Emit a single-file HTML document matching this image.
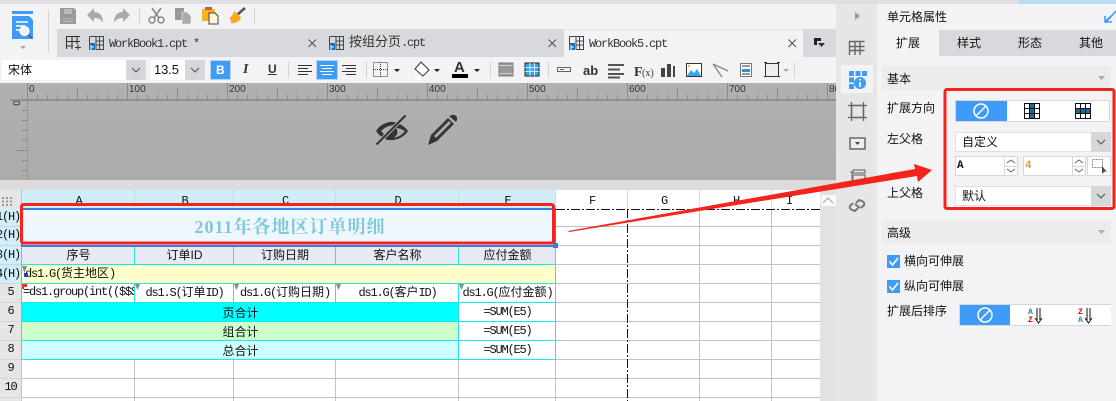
<!DOCTYPE html>
<html><head><meta charset="utf-8">
<style>
html,body{margin:0;padding:0;width:1116px;height:401px;overflow:hidden;background:#f3f3f6}
body{position:relative;font-family:"Liberation Sans","WenQuanYi Zen Hei",sans-serif;font-size:12px;color:#111}
.b{position:absolute}
.t{position:absolute;white-space:pre;line-height:16px}
.m{font-family:"Liberation Mono","WenQuanYi Zen Hei",monospace;font-size:12px;letter-spacing:-1.2px}
.k{letter-spacing:0}
.c{text-align:center}
.s{font-family:"Liberation Sans","WenQuanYi Zen Hei",sans-serif;font-size:12px}
.r{font-size:10px;color:#333}
svg{position:absolute;left:0;top:0;overflow:visible}
</style></head><body>
<div class="b" style="left:0;top:0;width:1116px;height:4px;background:#e0e0e2"></div>
<div class="b" style="left:1019px;top:0;width:97px;height:4px;background:#b8dcf2"></div>
<!-- tab bar -->
<div class="b" style="left:57px;top:29px;width:783px;height:28px;background:#d8d9dc"></div>
<div class="b" style="left:564px;top:29px;width:239px;height:28px;background:#f3f3f6;border-top:1px solid #e2e2e4;box-sizing:border-box"></div>
<div class="t m" style="left:109px;top:36px;color:#333">WorkBook1.cpt *</div>
<div class="t m" style="left:349px;top:35px;color:#333"><span class="k" style="font-size:13px">按组分页</span>.cpt</div>
<div class="t m" style="left:589px;top:36px;color:#333">WorkBook5.cpt</div>
<!-- toolbar -->
<div class="b" style="left:2px;top:60px;width:124px;height:20px;background:#fff"></div>
<div class="b" style="left:126px;top:60px;width:20px;height:20px;background:#d6d7da"></div>
<div class="b" style="left:151px;top:60px;width:34px;height:20px;background:#fff"></div>
<div class="b" style="left:185px;top:60px;width:20px;height:20px;background:#d6d7da"></div>
<div class="t" style="left:8px;top:62px">宋体</div>
<div class="t" style="left:154px;top:62px;font-size:13px;letter-spacing:-.1px">13.5</div>
<div class="b" style="left:210px;top:60px;width:21px;height:20px;background:#3f9bf8;border:1px solid #b8d4ee;box-sizing:border-box"></div>
<div class="t" style="left:216px;top:62px;color:#fff;font-weight:bold;font-size:12px">B</div>
<div class="t" style="left:243px;top:62px;color:#333;font-style:italic;font-weight:bold;font-family:'Liberation Serif',serif;font-size:14px">I</div>
<div class="t" style="left:268px;top:61px;color:#333;font-weight:bold;font-size:12px;text-decoration:underline">U</div>
<div class="b" style="left:316px;top:60px;width:22px;height:20px;background:#3f9bf8;border:1px solid #b8d4ee;box-sizing:border-box"></div>
<!-- ruler -->
<div class="b" style="left:0;top:83px;width:836px;height:97px;background:linear-gradient(#b1b1b1,#ababab)"></div>
<div class="b" style="left:0;top:180px;width:836px;height:10px;background:#dcdcde"></div>
<div class="t r" style="left:29px;top:82px">0</div>
<div class="t r" style="left:129px;top:82px">100</div>
<div class="t r" style="left:229px;top:82px">200</div>
<div class="t r" style="left:329px;top:82px">300</div>
<div class="t r" style="left:429px;top:82px">400</div>
<div class="t r" style="left:529px;top:82px">500</div>
<div class="t r" style="left:629px;top:82px">600</div>
<div class="t r" style="left:729px;top:82px">700</div>
<div class="t r" style="left:829px;top:82px;width:7px;overflow:hidden">800</div>
<div class="t r" style="left:12px;top:95px;transform:rotate(90deg)">0</div>
<!-- sheet -->
<div class="b" style="left:0;top:190px;width:820px;height:211px;background:#fff"></div>
<div class="b" style="left:0;top:190px;width:22px;height:211px;background:#e6e6e6"></div>
<div class="b" style="left:0;top:209px;width:22px;height:75px;background:#d0eefa"></div>
<div class="b" style="left:22px;top:190px;width:534px;height:19px;background:#d0eefa"></div>
<div class="b" style="left:22px;top:209px;width:534px;height:37px;background:#eef6fe"></div>
<div class="b" style="left:22px;top:246px;width:534px;height:19px;background:#e6eaf2"></div>
<div class="b" style="left:22px;top:265px;width:534px;height:19px;background:#ffffcc"></div>
<div class="b" style="left:22px;top:303px;width:437px;height:19px;background:#00ffff"></div>
<div class="b" style="left:22px;top:322px;width:437px;height:19px;background:#ccffcc"></div>
<div class="b" style="left:22px;top:341px;width:437px;height:19px;background:#ccffff"></div>
<div class="b" style="left:820px;top:190px;width:16px;height:211px;background:#e2e2e2"></div>
<div class="b" style="left:821px;top:195px;width:15px;height:11px;background:#f8f8f8"></div>
<!-- right strip + panel -->
<div class="b" style="left:836px;top:4px;width:41px;height:397px;background:#e6e6e6"></div>
<div class="b" style="left:841px;top:65px;width:32px;height:28px;background:#f3f3f6"></div>
<div class="b" style="left:939px;top:30px;width:177px;height:26px;background:#d8d9dc"></div>
<div class="t" style="left:887px;top:9px">单元格属性</div>
<div class="t" style="left:896px;top:35px">扩展</div>
<div class="t" style="left:957px;top:35px">样式</div>
<div class="t" style="left:1018px;top:35px">形态</div>
<div class="t" style="left:1079px;top:35px">其他</div>
<div class="b" style="left:882px;top:66px;width:229px;height:24px;background:#ececec"></div>
<div class="t" style="left:887px;top:71px">基本</div>
<div class="t" style="left:887px;top:100px">扩展方向</div>
<div class="t" style="left:887px;top:131px">左父格</div>
<div class="t" style="left:887px;top:185px">上父格</div>
<div class="b" style="left:955px;top:100px;width:155px;height:22px;background:#fff;border:1px solid #d6d7da;box-sizing:border-box"></div>
<div class="b" style="left:956px;top:101px;width:51px;height:20px;background:#3f9bf8"></div>
<div class="b" style="left:955px;top:132px;width:156px;height:20px;background:#fff;border:1px solid #e0e0e3;box-sizing:border-box"></div>
<div class="b" style="left:1091px;top:132px;width:20px;height:20px;background:#d6d7da"></div>
<div class="t" style="left:962px;top:134px">自定义</div>
<div class="b" style="left:955px;top:156px;width:63px;height:20px;background:#fff;border:1px solid #d6d7da;box-sizing:border-box"></div>
<div class="b" style="left:1023px;top:156px;width:63px;height:20px;background:#fff;border:1px solid #d6d7da;box-sizing:border-box"></div>
<div class="b" style="left:1087px;top:156px;width:24px;height:20px;background:#fff;border:1px solid #d6d7da;box-sizing:border-box"></div>
<div class="b" style="left:1004px;top:156px;width:1px;height:20px;background:#d6d7da"></div>
<div class="b" style="left:1072px;top:156px;width:1px;height:20px;background:#d6d7da"></div>
<div class="t m" style="left:957px;top:158px;font-size:11px;font-weight:bold">A</div>
<div class="t m" style="left:1025px;top:158px;font-size:11px;font-weight:bold;color:#d8a030">4</div>
<div class="b" style="left:955px;top:186px;width:156px;height:20px;background:#fff;border:1px solid #e0e0e3;box-sizing:border-box"></div>
<div class="b" style="left:1091px;top:186px;width:20px;height:20px;background:#d6d7da"></div>
<div class="t" style="left:962px;top:188px">默认</div>
<div class="b" style="left:882px;top:220px;width:229px;height:24px;background:#ececec"></div>
<div class="t" style="left:887px;top:225px">高级</div>
<div class="b" style="left:887px;top:255px;width:13px;height:13px;background:#3f9bf8"></div>
<div class="b" style="left:887px;top:280px;width:13px;height:13px;background:#3f9bf8"></div>
<div class="t" style="left:904px;top:253px">横向可伸展</div>
<div class="t" style="left:904px;top:278px">纵向可伸展</div>
<div class="t" style="left:887px;top:303px">扩展后排序</div>
<div class="b" style="left:959px;top:304px;width:152px;height:22px;background:#fff;border:1px solid #d6d7da;border-right:0;box-sizing:border-box"></div>
<div class="b" style="left:960px;top:305px;width:50px;height:20px;background:#3f9bf8"></div>

<svg width="1116" height="401" viewBox="0 0 1116 401">
<defs>
<pattern id="rt" x="27" y="83" width="100" height="17" patternUnits="userSpaceOnUse">
<path d="M.5 0V16M10.5 12V16M20.5 12V16M30.5 12V16M40.5 12V16M50.5 5V16M60.5 12V16M70.5 12V16M80.5 12V16M90.5 12V16" stroke="#8a8a8a" fill="none"/>
</pattern>
</defs>
<rect x="27" y="83" width="809" height="17" fill="url(#rt)"/>
<rect x="10" y="99" width="826" height="2" fill="#8f8f8f"/>
<rect x="27" y="100" width="1" height="80" fill="#999"/>
<path d="M22 110.500H27M22 120.500H27M22 130.500H27M22 140.500H27M17 150.500H27M22 160.500H27M22 170.500H27" stroke="#8a8a8a"/>

<!-- grid gray -->
<path d="M21.500 190V401M134.500 360V401M233.500 360V401M335.500 360V401M458.500 360V401M555.500 360V401M699.500 209V401M771.500 209V401
M22 378.500H820M22 397.500H820M22 359.500H820M556 226.500H820M556 245.500H820M556 264.500H820M556 283.500H820M556 302.500H820M556 321.500H820M556 340.500H820" stroke="#c2c2c2" fill="none"/>
<path d="M134.500 190V209M233.500 190V209M335.500 190V209M458.500 190V209M555.500 190V209" stroke="#c6dde6"/>
<path d="M699.500 190V209M771.500 190V209M627.500 190V209" stroke="#dcdcdc"/>
<path d="M0 226.500H22M0 245.500H22M0 264.500H22M0 283.500H22M0 302.500H22M0 321.500H22M0 340.500H22M0 359.500H22M0 378.500H22M0 397.500H22" stroke="#d4d4d4"/>
<!-- grid cyan -->
<path d="M22 264.500H556M22 283.500H556M22 302.500H556M22 321.500H556M22 340.500H556M22 359.500H556M21.500 246V360M555.500 246V360M458.500 246V265M458.500 284V360M134.500 246V265M134.500 284V303M233.500 246V265M233.500 284V303M335.500 246V265M335.500 284V303" stroke="#22e6e6" fill="none"/>
<!-- selection -->
<rect x="22" y="209" width="533" height="37" fill="none" stroke="#3a7fe0" stroke-width="2"/>
<rect x="553" y="243" width="5" height="5" fill="#3a7fe0"/>
<!-- page dash -->
<path d="M556 209.500H820M627.500 209V401" stroke="#111" stroke-dasharray="9 2 2 2" fill="none"/>

<!-- logo -->
<rect x="12" y="11" width="21" height="3" fill="#3f9bf8"/>
<path d="M12 16H29L33 20V39H12Z" fill="#3f9bf8"/>
<path d="M16 22H28M16 26H25M16 30H20" stroke="#fff" stroke-width="1.400"/>
<circle cx="24.500" cy="31" r="4.500" fill="#e6f3f8" stroke="#fff" stroke-width="1.200"/>
<path d="M28 35L32 38" stroke="#555" stroke-width="1.600"/>
<path d="M20 46H26L23 49Z" fill="#aaa"/>
<path d="M48.500 10V52M139.500 8V24M254.500 8V24" stroke="#d4d4d6"/>
<!-- save -->
<path d="M60 8H74L76 10V24H60Z" fill="#999"/><rect x="64" y="9" width="8" height="5" fill="#bbb"/><path d="M63 19H73M63 21.500H73" stroke="#bbb"/>
<!-- undo redo -->
<path d="M87 15L94 8V12C100 12 103 16 103 23C101 19 98 18 94 18V22Z" fill="#aaa"/>
<path d="M130 15L123 8V12C117 12 114 16 114 23C116 19 119 18 123 18V22Z" fill="#aaa"/>
<!-- cut -->
<path d="M152 8L159 18M161 8L154 18" stroke="#888" stroke-width="1.600"/><circle cx="152" cy="20" r="3" fill="none" stroke="#888" stroke-width="1.500"/><circle cx="161" cy="20" r="3" fill="none" stroke="#888" stroke-width="1.500"/>
<!-- copy -->
<path d="M175 8H184V20H175Z" fill="#999"/><path d="M182 12H187L191 16V24H182Z" fill="#aaa" stroke="#f3f3f6" stroke-width=".6"/>
<!-- paste -->
<path d="M202 9H215V21H202Z" fill="#f6b320"/><rect x="205" y="7" width="7" height="3" fill="#d9534f"/><path d="M209 13H215L218 16V24H209Z" fill="#fff6e0" stroke="#444"/>
<!-- brush -->
<path d="M237 15L245 8" stroke="#555" stroke-width="2.500"/><path d="M234 11L241 17C240 21 236 24 230 23C233 21 230 20 229 18C232 17 233 14 234 11Z" fill="#f6a920"/>
<!-- tabs icons -->
<path d="M66.500 36.500H80M66.500 41.500H80M66.500 36.500V49M72 36.500V49M77 36.500V44M66.500 46H73M75 47.500H81M78 44.500V50" stroke="#333" fill="none" stroke-width="1.100"/>
<path d="M89.500 36.500H103.500V49.500H96M96 36.500V49.500M99.500 36.500V49.500M96 41H103.500M96 45H103.500M89.500 36.500V43" stroke="#444" fill="none"/><path d="M89 43H95V50H89Z" fill="#1670b8"/><path d="M91 45V50M91 47H94" stroke="#fff"/>
<g transform="translate(240,0)"><path d="M89.500 36.500H103.500V49.500H96M96 36.500V49.500M99.500 36.500V49.500M96 41H103.500M96 45H103.500M89.500 36.500V43" stroke="#444" fill="none"/><path d="M89 43H95V50H89Z" fill="#1670b8"/><path d="M91 45V50M91 47H94" stroke="#fff"/></g>
<g transform="translate(480,0)"><path d="M89.500 36.500H103.500V49.500H96M96 36.500V49.500M99.500 36.500V49.500M96 41H103.500M96 45H103.500M89.500 36.500V43" stroke="#444" fill="none"/><path d="M89 43H95V50H89Z" fill="#1670b8"/><path d="M91 45V50M91 47H94" stroke="#fff"/></g>
<path d="M308.500 39.500L316 47M316 39.500L308.500 47M548.500 39.500L556 47M556 39.500L548.500 47M788.500 39.500L796 47M796 39.500L788.500 47" stroke="#555" stroke-width="1.100"/>
<path d="M814 38H821V41H817V45H814Z" fill="#222"/><path d="M818 43H825L821.500 47Z" fill="#333"/>
<!-- select arrows -->
<path d="M132 68L136 72L140 68M191 68L195 72L199 68M1097 140L1101 144L1105 140M1097 194L1101 198L1105 194" stroke="#555" fill="none" stroke-width="1.100"/>
<!-- align -->
<path d="M298 65.500H312M298 68.500H308M298 71.500H312M298 74.500H308M342 65.500H356M346 68.500H356M342 71.500H356M346 74.500H356" stroke="#333"/>
<path d="M320 65.500H334M322 68.500H332M320 71.500H334M322 74.500H332" stroke="#fff"/>
<path d="M288.500 62V78M366.500 62V78M490.500 62V78M548.500 62V78M794.500 62V78" stroke="#d4d4d6"/>
<rect x="373.500" y="62.500" width="14" height="14" fill="none" stroke="#333" stroke-dasharray="1 1"/><path d="M373 69.500H388M380.500 62V77" stroke="#333" stroke-dasharray="1 1"/>
<path d="M394 69H400L397 72ZM434 69H440L437 72ZM474 69H480L477 72Z" fill="#222"/>
<!-- fill -->
<path d="M421 62L429 70L423 76L415 69Z" fill="#fff" stroke="#333"/><path d="M415 76H420V80H415Z" fill="#fff"/>
<!-- font colour -->
<rect x="452" y="74" width="16" height="4" fill="#000"/>
<text x="454" y="72" font-family="Liberation Sans" font-weight="bold" font-size="15" fill="#333">A</text>
<!-- toolbar right -->
<rect x="499" y="63" width="14" height="13" fill="#999" stroke="#777"/><path d="M499 65.500H513M499 73.500H513" stroke="#ccc"/>
<rect x="525" y="63" width="14" height="13" fill="#33a8ee" stroke="#222"/><path d="M525 67.500H539M525 71.500H539M530 63V76M534.500 63V76" stroke="#fff" stroke-width=".8"/>
<rect x="557.500" y="67.500" width="13" height="4" fill="none" stroke="#666"/><path d="M560 69.500H564" stroke="#666"/>
<text x="583" y="75" font-family="Liberation Sans" font-weight="bold" font-size="13" fill="#333">ab</text>
<path d="M608 65H624M608 69.500H620M608 74H624M608 77.500H620" stroke="#555" stroke-width="2"/>
<text x="634" y="76" font-family="Liberation Serif" font-weight="bold" font-size="14" fill="#333">F</text>
<text x="642" y="76" font-family="Liberation Serif" font-size="10" fill="#333">(x)</text>
<path d="M661 68H665V77H661ZM667 64H671V77H667ZM673 66H675V77H673Z" fill="#444"/>
<rect x="686.500" y="63.500" width="15" height="13" fill="#fff" stroke="#333"/><path d="M687 76L691 70L694 73L697 69L701 76Z" fill="#33a8ee"/><circle cx="689" cy="66" r="1.300" fill="#f6c050"/>
<path d="M713 64L728 71M713 64L722 77" stroke="#888" stroke-width="1.300" fill="none"/>
<rect x="740.500" y="63.500" width="11" height="13" fill="#fff" stroke="#777"/><rect x="742" y="69" width="8" height="3" fill="#2a90d8"/><path d="M742 66H750M742 74H750" stroke="#333"/>
<rect x="765.500" y="63.500" width="13" height="13" fill="#eee" stroke="#333"/><path d="M783 69H789L786 72Z" fill="#aaa"/>
<path d="M764 62.500h3M764 76.500h3M777 62.500h3M777 76.500h3" stroke="#333"/>
<!-- eye -->
<path d="M376 131C381 123 391 120 398 123C402 125 406 128 408 131C403 139 392 142 385 139C381 137 378 134 376 131Z" fill="#333"/>
<path d="M381 131C385 127 390 125 395 125L387 137C385 136 383 133 381 131Z" fill="#ababab"/>
<path d="M396 128C400 128 403 130 405 131C402 135 398 137 394 138C397 135 399 132 396 128Z" fill="#ababab"/>
<path d="M377 144L405 116" stroke="#ababab" stroke-width="4"/><path d="M376.500 144.500L405.500 115.500" stroke="#333" stroke-width="2"/>
<!-- pencil -->
<path d="M428 145L431 135L448 118L454 124L437 141Z" fill="#333"/>
<path d="M434 136L449 121L451 123L436 138Z" fill="#ababab"/>
<path d="M449 116L452 115C455 114 458 117 457 120L456 122Z" fill="#333"/>
<!-- side strip -->
<path d="M855 12V20L860 16Z" fill="#999"/>
<path d="M849.500 51V41.500H864.500M849.500 46.500H864.500M849.500 50.500H864.500M855 41V55M860 41V55M849.500 41V55" stroke="#666" stroke-width="1.400" fill="none"/>
<path d="M849 71h5v5h-5zM855.500 71h5v5h-5zM862 71h5v5h-5zM849 77.500h5v5h-5zM849 84h5v5h-5z" fill="#3f9bf8"/>
<circle cx="860" cy="83" r="6" fill="#3f9bf8"/><path d="M860 82V87M860 79V80.500" stroke="#fff" stroke-width="1.600"/>
<rect x="851.500" y="105.500" width="12" height="12" fill="none" stroke="#666" stroke-width="1.600"/>
<path d="M848 105.500h3M864 105.500h3M848 117.500h3M864 117.500h3M851.500 102v3M863.500 102v3M851.500 118v3M863.500 118v3" stroke="#666" stroke-width="1.300"/>
<rect x="850" y="138" width="15" height="11" fill="#eee" stroke="#666" stroke-width="1.500"/><path d="M855 142H860L857.500 145Z" fill="#444"/>
<path d="M850 172H852V182H850M853 170H865V173H853ZM853 175H865V181H853Z" fill="none" stroke="#777" stroke-width="1.300"/>
<path d="M853 203L850 206C849 208 850 209 852 210L855 211L858 208M861 208L864 205C865 203 864 202 862 201L859 200L856 203M855 204L860 208" fill="none" stroke="#777" stroke-width="2"/>
<!-- panel -->
<path d="M1111 16L1105 22M1116 11L1106 22H1112M1105 16V22" stroke="#3f9bf8" stroke-width="1.600" fill="none"/>
<path d="M1098 76H1105L1101.500 80Z M1098 230H1105L1101.500 234Z" fill="#aaa"/>
<circle cx="981" cy="111" r="7" fill="none" stroke="#fff" stroke-width="1.500"/><path d="M976 116L986 106" stroke="#fff" stroke-width="1.500"/>
<rect x="1024.500" y="103.500" width="15" height="15" fill="#fff" stroke="#111"/><rect x="1030" y="104" width="4.500" height="14" fill="#1f6a94"/><path d="M1029.500 104V118M1034.500 104V118M1025 108.500H1039M1025 113.500H1039" stroke="#111"/>
<rect x="1075.500" y="103.500" width="15" height="15" fill="#fff" stroke="#111"/><rect x="1076" y="108.500" width="14" height="5" fill="#1f6a94"/><path d="M1080.500 104V118M1085.500 104V118M1076 108.500H1090M1076 113.500H1090" stroke="#111"/>
<path d="M1007 163L1011 160L1015 163M1007 169L1011 172L1015 169M1075 163L1079 160L1083 163M1075 169L1079 172L1083 169" stroke="#666" fill="none"/>
<path d="M1004 166.500H1017M1072 166.500H1085" stroke="#d6d7da"/>
<rect x="1092.500" y="159.500" width="10" height="8" fill="none" stroke="#888" stroke-dasharray="2 1"/>
<path d="M1102 166L1102 174L1104.500 171.500L1107 172Z" fill="#444"/>
<path d="M889.500 261.500L892.500 265L898 258M889.500 286.500L892.500 290L898 283" stroke="#fff" stroke-width="1.600" fill="none"/>
<circle cx="985" cy="315" r="7" fill="none" stroke="#fff" stroke-width="1.500"/><path d="M980 320L990 310" stroke="#fff" stroke-width="1.500"/>
<text x="1028" y="314" font-family="Liberation Mono" font-size="8" font-weight="bold" fill="#2a7ab0">A</text>
<text x="1028" y="322" font-family="Liberation Mono" font-size="8" font-weight="bold" fill="#e00">Z</text>
<path d="M1037 308V320M1040 308V320M1035 318L1038.500 323L1042 318" stroke="#111" fill="none"/>
<text x="1078" y="314" font-family="Liberation Mono" font-size="8" font-weight="bold" fill="#e00">Z</text>
<text x="1078" y="322" font-family="Liberation Mono" font-size="8" font-weight="bold" fill="#2a7ab0">A</text>
<path d="M1087 308V320M1090 308V320M1085 318L1088.500 323L1092 318" stroke="#111" fill="none"/>
<path d="M823 203L828 198L833 203" fill="none" stroke="#aaa" stroke-width="1.100"/>
</svg>

<!-- sheet text -->
<div class="t m c" style="left:22px;top:193px;width:113px">A</div>
<div class="t m c" style="left:135px;top:193px;width:99px">B</div>
<div class="t m c" style="left:234px;top:193px;width:102px">C</div>
<div class="t m c" style="left:336px;top:193px;width:123px">D</div>
<div class="t m c" style="left:459px;top:193px;width:97px">E</div>
<div class="t m c" style="left:556px;top:193px;width:72px">F</div>
<div class="t m c" style="left:628px;top:193px;width:72px">G</div>
<div class="t m c" style="left:700px;top:193px;width:72px">H</div>
<div class="t m c" style="left:772px;top:193px;width:48px;padding-right:14px;box-sizing:border-box">I</div>
<svg width="1116" height="401"><path d="M2 197h2v2h-2zM6 197h2v2h-2zM10 197h2v2h-2zM2 200.500h2v2h-2zM6 200.500h2v2h-2zM10 200.500h2v2h-2zM2 204h2v2h-2zM6 204h2v2h-2zM10 204h2v2h-2z" fill="#999"/></svg>
<div class="b" style="left:0;top:209px;width:20px;height:75px;overflow:hidden">
<div class="t m" style="right:0;top:0">1(H)</div>
<div class="t m" style="right:0;top:18px">2(H)</div>
<div class="t m" style="right:0;top:38px">3(H)</div>
<div class="t m" style="right:0;top:57px">4(H)</div>
</div>
<div class="t m c" style="left:0;top:284px;width:21px">5</div>
<div class="t m c" style="left:0;top:303px;width:21px">6</div>
<div class="t m c" style="left:0;top:322px;width:21px">7</div>
<div class="t m c" style="left:0;top:341px;width:21px">8</div>
<div class="t m c" style="left:0;top:360px;width:21px">9</div>
<div class="t m c" style="left:0;top:379px;width:21px">10</div>

<div class="t c" style="left:23px;top:217px;width:534px;font-family:'Liberation Serif','Noto Serif CJK SC',serif;font-size:18px;font-weight:bold;letter-spacing:1px;color:#7ec8d8;line-height:20px">2011年各地区订单明细</div>
<div class="t s c" style="left:22px;top:247px;width:113px">序号</div>
<div class="t s c" style="left:135px;top:247px;width:99px">订单ID</div>
<div class="t s c" style="left:234px;top:247px;width:102px">订购日期</div>
<div class="t s c" style="left:336px;top:247px;width:123px">客户名称</div>
<div class="t s c" style="left:459px;top:247px;width:97px">应付金额</div>
<div class="t m" style="left:25px;top:266px">ds1.G(<span class="k">货主地区</span>)</div>
<div class="b" style="left:22px;top:285px;width:112px;height:16px;overflow:hidden"><div class="t m" style="left:1px;top:-1px">=ds1.group(int(($$$/10)*10)</div></div>
<div class="t m c" style="left:135px;top:285px;width:99px">ds1.S(<span class="k">订单</span>ID)</div>
<div class="t m c" style="left:234px;top:285px;width:102px">ds1.G(<span class="k">订购日期</span>)</div>
<div class="t m c" style="left:336px;top:285px;width:123px">ds1.G(<span class="k">客户</span>ID)</div>
<div class="t m c" style="left:459px;top:285px;width:97px">ds1.G(<span class="k">应付金额</span>)</div>
<div class="t s c" style="left:22px;top:305px;width:437px">页合计</div>
<div class="t s c" style="left:22px;top:324px;width:437px">组合计</div>
<div class="t s c" style="left:22px;top:343px;width:437px">总合计</div>
<div class="t m c" style="left:459px;top:304px;width:97px">=SUM(E5)</div>
<div class="t m c" style="left:459px;top:323px;width:97px">=SUM(E5)</div>
<div class="t m c" style="left:459px;top:342px;width:97px">=SUM(E5)</div>
<svg width="1116" height="401">
<path d="M22 284H27V287H24V289H22Z" fill="#e33"/>
<path d="M135 284h5l-2.500 6zM234 284h5l-2.500 6zM336 284h5l-2.500 6zM459 284h5l-2.500 6z" fill="#888"/>
<path d="M22 266h5l-2.500 7z" fill="#888"/><path d="M24 273h4v4h-4z" fill="#1a3fe0"/>
<!-- red annotations -->
<rect x="21.500" y="204.500" width="532" height="38.500" rx="2" fill="none" stroke="#f5231c" stroke-width="3"/>
<rect x="945" y="89.500" width="169" height="119" rx="2" fill="none" stroke="#f5231c" stroke-width="3"/>
<path d="M568 231L915 169L914 164L932 170L918 182L917 176L569 232Z" fill="#f5231c"/>
</svg>
</body></html>
